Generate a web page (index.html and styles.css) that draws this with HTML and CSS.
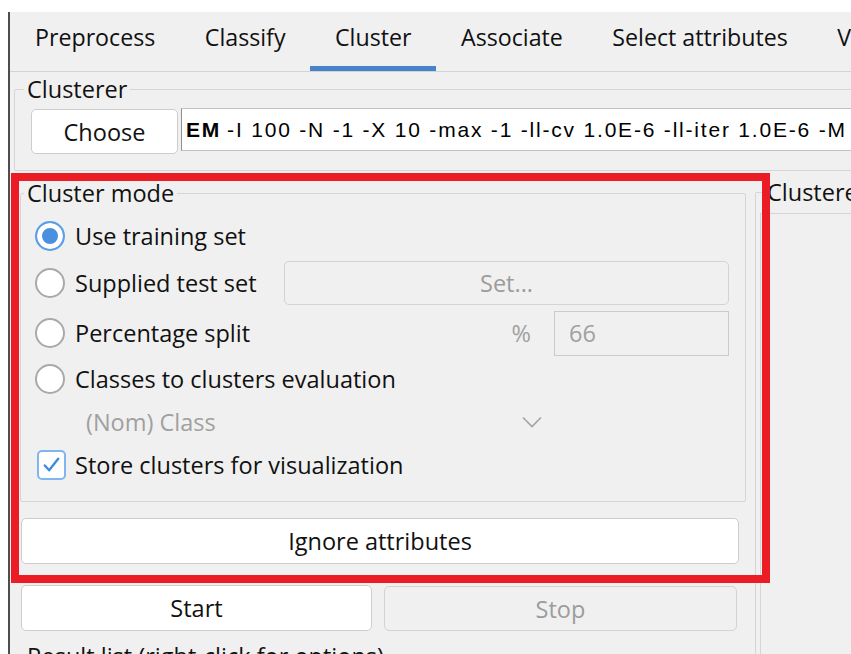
FILE: index.html
```html
<!DOCTYPE html>
<html lang="en">
<head>
<meta charset="utf-8">
<title>Weka Explorer - Cluster</title>
<link rel="stylesheet" href="styles.css">
</head>
<body>
<div class="window">
  <nav class="tabs">
    <span class="tab">Preprocess</span>
    <span class="tab">Classify</span>
    <span class="tab active">Cluster</span>
    <span class="tab">Associate</span>
    <span class="tab">Select attributes</span>
    <span class="tab">Visualize</span>
  </nav>

  <fieldset class="group clusterer">
    <legend>Clusterer</legend>
    <div class="chooser">
      <button class="btn choose">Choose</button>
      <div class="spec"><b>EM</b> -I 100 -N -1 -X 10 -max -1 -ll-cv 1.0E-6 -ll-iter 1.0E-6 -M 1.0E-6 -K 10 -num-slots 1 -S 100</div>
    </div>
  </fieldset>

  <div class="main">
    <div class="left">
      <fieldset class="group mode">
        <legend>Cluster mode</legend>
        <div class="mode-grid">
          <label class="opt span"><span class="radio on"></span>Use training set</label>

          <label class="opt"><span class="radio"></span>Supplied test set</label>
          <button class="btn set" disabled>Set...</button>

          <label class="opt"><span class="radio"></span>Percentage split</label>
          <div class="split">
            <span class="muted">%</span>
            <span class="field">66</span>
          </div>

          <label class="opt span"><span class="radio"></span>Classes to clusters evaluation</label>

          <div class="combo span">
            <span class="muted">(Nom) Class</span>
            <svg class="chevron" width="20" height="12" viewBox="0 0 20 12"><path d="M1 1.5 L10 10.5 L19 1.5" fill="none" stroke="#a3a3a3" stroke-width="1.6"/></svg>
          </div>

          <label class="opt span"><span class="check"><svg width="26" height="26" viewBox="0 0 26 26"><path d="M6 13.5 L10.5 18.5 L20 6.5" fill="none" stroke="#3d8ae0" stroke-width="2.4" stroke-linecap="round" stroke-linejoin="round"/></svg></span>Store clusters for visualization</label>
        </div>
      </fieldset>

      <button class="btn ignore">Ignore attributes</button>

      <div class="runbar">
        <button class="btn start">Start</button>
        <button class="btn stop" disabled>Stop</button>
      </div>

      <div class="caption">Result list (right-click for options)</div>
    </div>

    <div class="right">
      <fieldset class="group output">
        <legend>Clusterer output</legend>
        <div class="outbox"></div>
      </fieldset>
    </div>
  </div>

  <div class="highlight"></div>
</div>
</body>
</html>
```
FILE: styles.css
```css
* { box-sizing: border-box; }

html, body {
  margin: 0;
  background: #ffffff;
}

body {
  width: 851px;
  height: 654px;
  overflow: hidden;
  font-family: "Open Sans", "Noto Sans", sans-serif;
  font-size: 23.5px;
  line-height: 32px;
  color: #111111;
}

.window {
  position: relative;
  margin: 12px 0 0 8px;
  height: 642px;
  border-left: 2px solid #4e4e4e;
  background: #f0f0f0;
  overflow: hidden;
}

/* tab strip */
.tabs {
  display: flex;
  height: 60px;
  border-bottom: 1px solid #d3d3d3;
  white-space: nowrap;
}

.tab {
  flex: none;
  height: 59px;
  padding: 9px 24.5px 0 25px;
  font-size: 23.2px;
  border-bottom: 5px solid transparent;
}

.tab.active {
  border-bottom-color: #4683c8;
}

/* titled groups */
.group {
  margin: 0;
  padding: 0;
  border: 1px solid #d5d5d5;
  border-radius: 2px;
  min-inline-size: 0;
}

.group legend {
  padding: 0 3px;
  line-height: 32px;
}

.clusterer {
  margin: 1px -30px 0 4px;
}

.clusterer legend {
  margin-left: 9px;
}

.chooser {
  display: flex;
  align-items: flex-start;
  padding: 3px 0 16px 16px;
}

.btn {
  font: inherit;
  line-height: 32px;
  color: #111111;
  background: #ffffff;
  border: 1px solid #cdcdcd;
  border-radius: 5px;
  padding: 0;
  text-align: center;
}

.btn[disabled] {
  background: #f0f0f0;
  color: #9c9c9c;
  border-color: #d3d3d3;
}

.choose {
  flex: none;
  width: 147px;
  height: 45px;
  margin-top: 1px;
}

.spec {
  flex: 1;
  height: 43px;
  margin-left: 3px;
  padding-left: 4px;
  display: flex;
  align-items: center;
  background: #ffffff;
  border: 1px solid #c2c2c2;
  border-left-color: #8f8f8f;
  border-right: none;
  font-family: "Liberation Sans", Arial, sans-serif;
  font-size: 21px;
  letter-spacing: 1.8px;
  white-space: nowrap;
  overflow: hidden;
  color: #000000;
}

.spec b {
  margin-right: 6px;
}

/* lower area */
.main {
  display: flex;
}

.left {
  flex: none;
  width: 745px;
}

.mode {
  width: 726px;
  margin: 6px 0 0 10px;
}

.mode legend {
  margin-left: 3px;
}

.mode-grid {
  display: grid;
  grid-template-columns: 249px 445px;
  grid-template-rows: 48px 46px 54px 38px 48px 38px;
  padding: 3px 0 17px 14px;
  align-items: center;
}

.span {
  grid-column: 1 / -1;
}

.opt {
  display: flex;
  align-items: center;
  gap: 10px;
  white-space: nowrap;
}

.radio {
  flex: none;
  width: 30px;
  height: 30px;
  border-radius: 50%;
  border: 2px solid #a9a9a9;
  background: #ffffff;
}

.radio.on {
  border-color: #5b9fea;
  background: #4a8fe0;
  box-shadow: inset 0 0 0 5px #ffffff;
}

.check {
  flex: none;
  width: 29px;
  height: 30px;
  margin-left: 2px;
  margin-right: -1px;
  border: 2px solid #80b5ee;
  border-radius: 5px;
  background: #ffffff;
  display: flex;
  align-items: center;
  justify-content: center;
}

.set {
  height: 44px;
}

.split {
  display: flex;
  align-items: center;
  justify-content: flex-end;
  gap: 23px;
}

.muted {
  color: #a0a0a0;
}

.field {
  width: 175px;
  height: 45px;
  padding-left: 14px;
  display: flex;
  align-items: center;
  border: 1px solid #cbcbcb;
  color: #a0a0a0;
}

.combo {
  display: flex;
  align-items: center;
  padding-left: 51px;
}

.chevron {
  margin-left: auto;
  margin-right: 187px;
}

.ignore {
  display: block;
  width: 718px;
  height: 46px;
  margin: 16px 0 0 11px;
}

.runbar {
  display: flex;
  align-items: flex-start;
  gap: 12px;
  margin: 21px 0 0 11px;
}

.start {
  width: 351px;
  height: 46px;
}

.stop {
  width: 353px;
  height: 45px;
  margin-top: 1px;
}

.caption {
  margin-top: 9px;
  padding-left: 17px;
  white-space: nowrap;
}

.right {
  flex: 1;
  min-width: 0;
}

.output {
  margin: 5px -30px 0 0;
  border-bottom: none;
}

.output legend {
  margin-left: 8px;
  white-space: nowrap;
}

.outbox {
  height: 500px;
  margin: 5px 0 0 4px;
  border-top: 1px solid #d5d5d5;
  border-left: 1px solid #d5d5d5;
}

/* red annotation frame drawn over the panel */
.highlight {
  position: absolute;
  left: 1px;
  top: 161px;
  width: 759px;
  height: 410px;
  border: 8px solid #ec1c24;
  pointer-events: none;
}
```
